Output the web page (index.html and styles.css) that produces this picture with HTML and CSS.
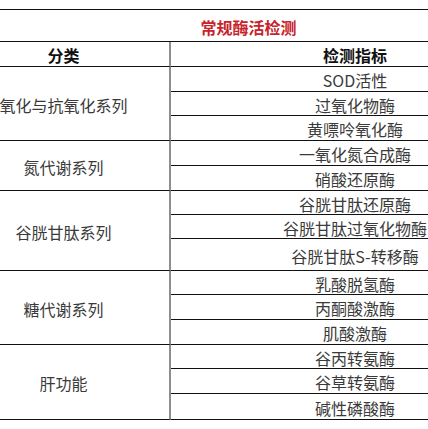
FILE: index.html
```html
<!DOCTYPE html>
<html lang="zh">
<head>
<meta charset="utf-8">
<link rel="stylesheet" href="styles.css">
</head>
<body>
<div class="frame">
  <div class="sheet">
    <div class="title">常规酶活检测</div>
    <div class="head left">分类</div>
    <div class="head right">检测指标</div>

    <div class="group span3">氧化与抗氧化系列</div>
    <div class="item">SOD活性</div>
    <div class="item">过氧化物酶</div>
    <div class="item">黄嘌呤氧化酶</div>

    <div class="group span2">氮代谢系列</div>
    <div class="item">一氧化氮合成酶</div>
    <div class="item">硝酸还原酶</div>

    <div class="group span3">谷胱甘肽系列</div>
    <div class="item">谷胱甘肽还原酶</div>
    <div class="item">谷胱甘肽过氧化物酶</div>
    <div class="item">谷胱甘肽S-转移酶</div>

    <div class="group span3">糖代谢系列</div>
    <div class="item">乳酸脱氢酶</div>
    <div class="item">丙酮酸激酶</div>
    <div class="item">肌酸激酶</div>

    <div class="group span3">肝功能</div>
    <div class="item">谷丙转氨酶</div>
    <div class="item">谷草转氨酶</div>
    <div class="item">碱性磷酸酶</div>
  </div>
</div>
</body>
</html>
```

FILE: styles.css
```css
html, body {
  margin: 0;
  padding: 0;
  background: #ffffff;
}

.frame {
  width: 428px;
  height: 429px;
  overflow: hidden;
  padding-top: 9px;
  box-sizing: border-box;
}

.sheet {
  margin-left: -42px;
  width: 581px;
  display: grid;
  grid-template-columns: 213px 368px;
  grid-template-rows: 32px 25px 25px 24px 25px 25px 25px 24px 24px 32px 24px 25px 25px 24px 25px 26px;
  border-top: 1px solid #111;
  font-family: "Noto Sans CJK SC", "Noto Sans", sans-serif;
  font-size: 16px;
  color: #3a3a3a;
}

.sheet > div {
  box-sizing: border-box;
  border-bottom: 1px solid #111;
  display: flex;
  align-items: center;
  justify-content: center;
  line-height: 1;
  padding-top: 2px;
  white-space: nowrap;
}

.title {
  grid-column: 1 / 3;
  color: #c8232c;
  font-weight: bold;
}

.head {
  font-weight: bold;
  color: #111;
}

.left,
.group {
  grid-column: 1;
  border-right: 2px solid #8e8e8e;
}

.right,
.item {
  grid-column: 2;
}

.span2 {
  grid-row: span 2;
}

.span3 {
  grid-row: span 3;
}
```
